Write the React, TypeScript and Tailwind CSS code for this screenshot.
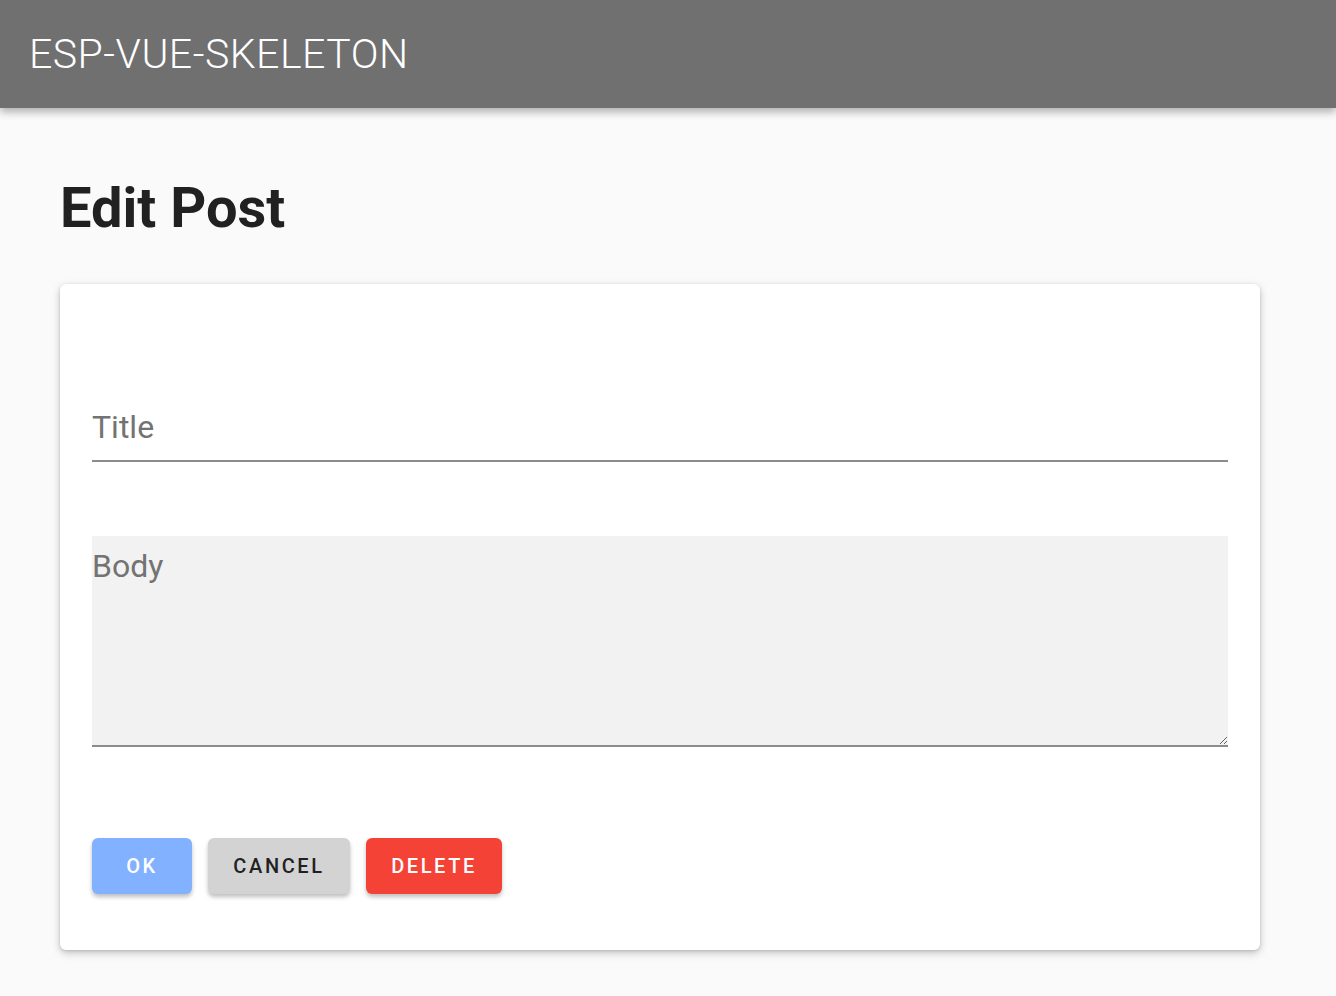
import React from "react";

export default function App() {
  return (
    <div className="min-h-[996px] bg-[#fafafa] font-['Roboto',sans-serif]">
      <header className="h-[108px] bg-[#707070] flex items-center px-[29px] shadow-[0_4px_8px_rgba(0,0,0,0.3)]">
        <h1 className="text-white text-[41px] font-light tracking-[0.012em] leading-none">ESP-VUE-SKELETON</h1>
      </header>

      <main className="px-[60px] pt-[72px]">
        <h2 className="text-[56px] font-bold text-[#212121] leading-none">Edit Post</h2>

        <form
          className="mt-[48px] w-[1200px] bg-white rounded-[6px] shadow-[0_3px_8px_rgba(0,0,0,0.22),0_1px_3px_rgba(0,0,0,0.12)] px-[32px] pt-[122px] pb-[56px]"
          onSubmit={(e) => e.preventDefault()}
        >
          <input
            type="text"
            placeholder="Title"
            className="block w-full h-[56px] pb-[12px] text-[32px] text-[#212121] placeholder:text-[#737373] border-b-2 border-[#8c8c8c] outline-none bg-transparent"
          />

          <textarea
            placeholder="Body"
            className="block mt-[74px] w-full h-[211px] text-[32px] leading-[1.3] pt-[10px] text-[#212121] placeholder:text-[#737373] bg-[#f2f2f2] border-b-2 border-[#8c8c8c] outline-none"
          />

          <div className="mt-[91px] flex gap-[16px]">
            <button
              type="submit"
              className="h-[56px] w-[100px] rounded-[6px] bg-[#82b1ff] text-white text-[20px] font-medium tracking-[0.13em] shadow-[0_3px_4px_rgba(0,0,0,0.25)]"
            >
              OK
            </button>
            <button
              type="button"
              className="h-[56px] w-[142px] rounded-[6px] bg-[#d3d3d3] text-[#212121] text-[20px] font-medium tracking-[0.13em] shadow-[0_3px_4px_rgba(0,0,0,0.25)]"
            >
              CANCEL
            </button>
            <button
              type="button"
              className="h-[56px] w-[136px] rounded-[6px] bg-[#f44336] text-white text-[20px] font-medium tracking-[0.13em] shadow-[0_3px_4px_rgba(0,0,0,0.25)]"
            >
              DELETE
            </button>
          </div>
        </form>
      </main>
    </div>
  );
}
